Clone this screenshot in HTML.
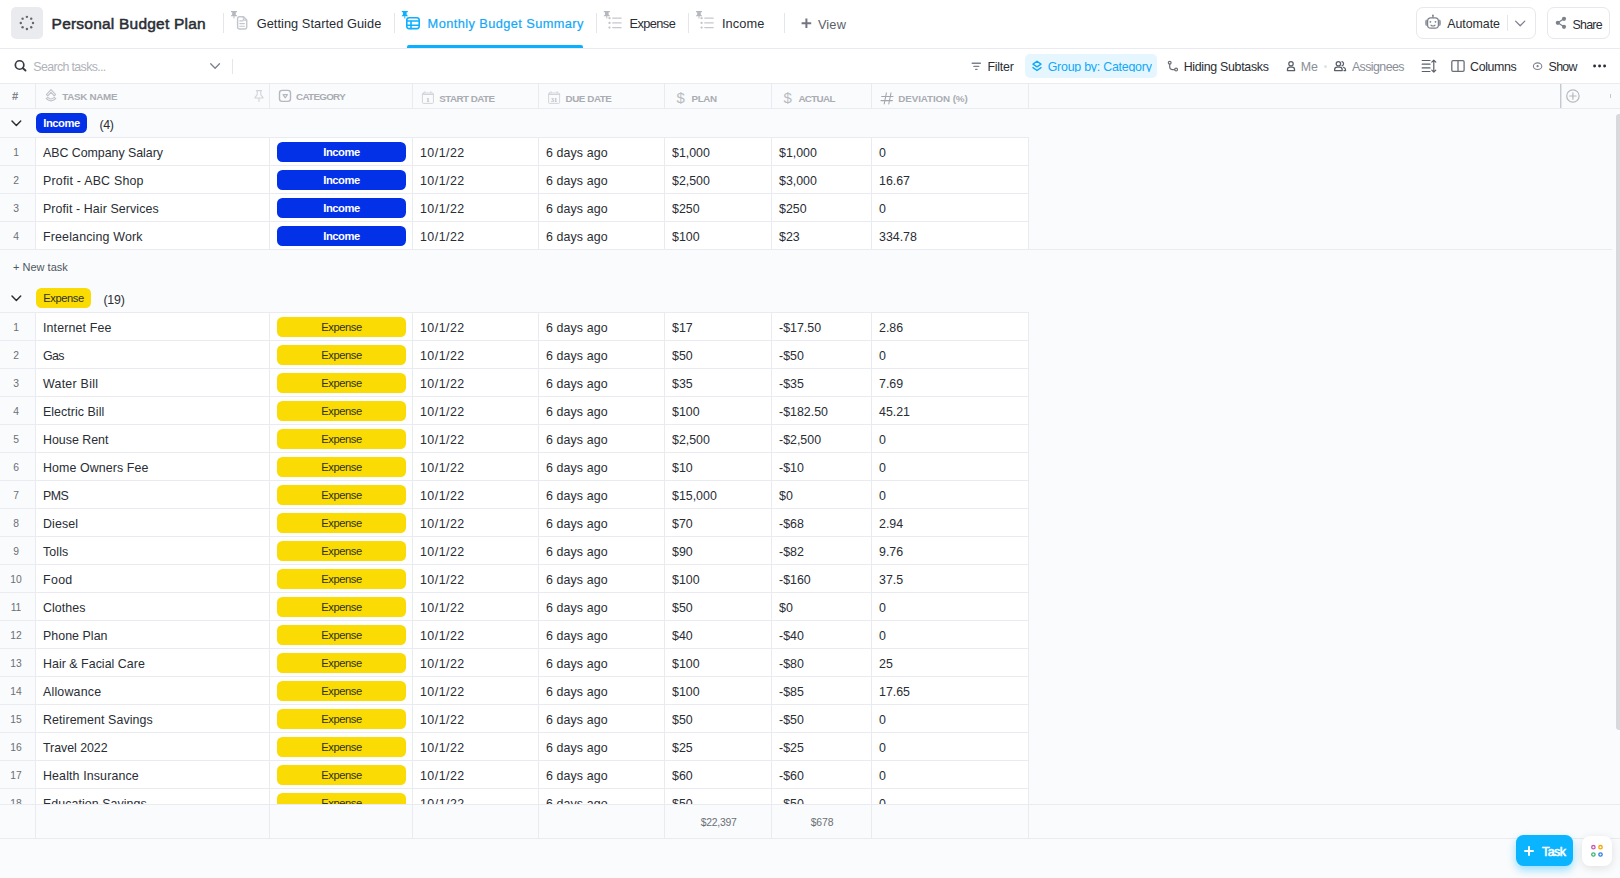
<!DOCTYPE html>
<html lang="en">
<head>
<meta charset="utf-8">
<title>Personal Budget Plan</title>
<style>
*{box-sizing:border-box;margin:0;padding:0}
html,body{width:1620px;height:878px;overflow:hidden;background:#fafbfc}
body{font-family:"Liberation Sans",sans-serif;color:#292d34;position:relative;font-size:12.4px}
.abs{position:absolute}
.t{position:absolute;white-space:nowrap;line-height:1}
#top{position:absolute;left:0;top:0;width:1620px;height:49px;background:#fff;border-bottom:1px solid #e9ebf0}
#fbar{position:absolute;left:0;top:49px;width:1620px;height:35px;background:#fff;border-bottom:1px solid #e9ebf0}
#thead{position:absolute;left:0;top:84px;width:1620px;height:25px;background:#fafbfc;border-bottom:1px solid #e9ebf0}
.vsep{position:absolute;width:1px;background:#e4e6ea}
.hl{position:absolute;top:0;width:1px;height:24px;background:#e9ebf0}
#body{position:absolute;left:0;top:109px;width:1620px;height:695px;overflow:hidden}
.rows{position:absolute;left:0;width:1029px;border-top:1px solid #e9ebf0}
.rows .row{position:relative;display:flex;height:28px;border-bottom:1px solid #e9ebf0;background:#fff}
.c{height:27px;line-height:31px;white-space:nowrap;overflow:hidden;border-right:1px solid #e9ebf0;padding-left:7px;font-size:12.4px;color:#292d34}
.c0{width:36px;background:#fafbfc;color:#6b6f76;font-size:10.3px;padding-left:0;padding-right:3px;text-align:center;line-height:29px}
.c1{width:234px}
.c2{width:143px;padding:0;position:relative}
.c3{width:126px;letter-spacing:0.48px}
.c4{width:126px;letter-spacing:0.1px}
.c5{width:107px}
.c6{width:100px}
.c7{width:157px}
.pill{position:absolute;left:7px;top:4px;width:129px;height:20px;border-radius:5.5px;text-align:center;line-height:20px;font-size:11.2px;letter-spacing:-0.45px}
.badge{position:absolute;height:20px;border-radius:5.5px;text-align:center;line-height:20px;font-size:11.2px;letter-spacing:-0.45px}
.inc{background:#0231e8;color:#fff;font-weight:700}
.exp{background:#fadb03;color:#2f3226;font-weight:400}
#icons{position:absolute;left:0;top:0;width:1620px;height:878px;overflow:visible;pointer-events:none}
</style>
</head>
<body>
<div id="top">
  <div class="abs" style="left:11px;top:7px;width:32px;height:32px;border-radius:5px;background:#eaebee"></div>
  <div class="vsep" style="left:223px;top:13px;height:20px"></div>
  <div class="vsep" style="left:394px;top:13px;height:20px"></div>
  <div class="abs" style="left:407px;top:45px;width:176px;height:3px;background:#08b0ff;border-radius:2px 2px 0 0"></div>
  <div class="vsep" style="left:596px;top:13px;height:20px"></div>
  <div class="vsep" style="left:688px;top:13px;height:20px"></div>
  <div class="vsep" style="left:784px;top:13px;height:20px"></div>
  <div class="abs" style="left:1416px;top:7px;width:120px;height:32px;border:1px solid #e6e8ed;border-radius:7px;background:#fff"></div>
  <div class="vsep" style="left:1507px;top:15px;height:16px"></div>
  <div class="abs" style="left:1547px;top:7px;width:63px;height:32px;border:1px solid #e6e8ed;border-radius:7px;background:#fff"></div>
</div>
<div id="fbar">
  <div class="vsep" style="left:232px;top:10px;height:15px"></div>
  <div class="abs" style="left:1025px;top:5px;width:132px;height:24px;border-radius:5px;background:#e5f6ff"></div>
</div>
<div id="thead">
  <div class="hl" style="left:35px"></div>
  <div class="hl" style="left:269px"></div>
  <div class="hl" style="left:412px"></div>
  <div class="hl" style="left:538px"></div>
  <div class="hl" style="left:664px"></div>
  <div class="hl" style="left:771px"></div>
  <div class="hl" style="left:871px"></div>
  <div class="hl" style="left:1028px"></div>
  <div class="abs" style="left:1560px;top:0;width:1px;height:24px;background:#c6c9cf"></div><div class="abs" style="left:1561px;top:0;width:1px;height:24px;background:#e3e5ea"></div>
  <div class="abs" style="left:1610px;top:10px;width:1px;height:4px;background:#c5c7cd"></div>
</div>
<div id="body">
  <div class="badge inc" style="left:36px;top:4px;width:51px">Income</div>
  <div class="rows" style="top:28px">
<div class="row"><div class="c c0">1</div><div class="c c1" style="letter-spacing:-0.035px">ABC Company Salary</div><div class="c c2"><span class="pill inc">Income</span></div><div class="c c3">10/1/22</div><div class="c c4">6 days ago</div><div class="c c5">$1,000</div><div class="c c6">$1,000</div><div class="c c7">0</div></div>
<div class="row"><div class="c c0">2</div><div class="c c1" style="letter-spacing:0.212px">Profit - ABC Shop</div><div class="c c2"><span class="pill inc">Income</span></div><div class="c c3">10/1/22</div><div class="c c4">6 days ago</div><div class="c c5">$2,500</div><div class="c c6">$3,000</div><div class="c c7">16.67</div></div>
<div class="row"><div class="c c0">3</div><div class="c c1" style="letter-spacing:0.095px">Profit - Hair Services</div><div class="c c2"><span class="pill inc">Income</span></div><div class="c c3">10/1/22</div><div class="c c4">6 days ago</div><div class="c c5">$250</div><div class="c c6">$250</div><div class="c c7">0</div></div>
<div class="row"><div class="c c0">4</div><div class="c c1" style="letter-spacing:0.173px">Freelancing Work</div><div class="c c2"><span class="pill inc">Income</span></div><div class="c c3">10/1/22</div><div class="c c4">6 days ago</div><div class="c c5">$100</div><div class="c c6">$23</div><div class="c c7">334.78</div></div>
  </div>
  <div class="abs" style="left:1029px;top:140px;width:583px;height:1px;background:#e9ebf0"></div>
  <div class="badge exp" style="left:36px;top:179px;width:55px">Expense</div>
  <div class="rows" style="top:203px">
<div class="row"><div class="c c0">1</div><div class="c c1" style="letter-spacing:0.145px">Internet Fee</div><div class="c c2"><span class="pill exp">Expense</span></div><div class="c c3">10/1/22</div><div class="c c4">6 days ago</div><div class="c c5">$17</div><div class="c c6">-$17.50</div><div class="c c7">2.86</div></div>
<div class="row"><div class="c c0">2</div><div class="c c1" style="letter-spacing:-0.7px">Gas</div><div class="c c2"><span class="pill exp">Expense</span></div><div class="c c3">10/1/22</div><div class="c c4">6 days ago</div><div class="c c5">$50</div><div class="c c6">-$50</div><div class="c c7">0</div></div>
<div class="row"><div class="c c0">3</div><div class="c c1" style="letter-spacing:0.266px">Water Bill</div><div class="c c2"><span class="pill exp">Expense</span></div><div class="c c3">10/1/22</div><div class="c c4">6 days ago</div><div class="c c5">$35</div><div class="c c6">-$35</div><div class="c c7">7.69</div></div>
<div class="row"><div class="c c0">4</div><div class="c c1" style="letter-spacing:0.05px">Electric Bill</div><div class="c c2"><span class="pill exp">Expense</span></div><div class="c c3">10/1/22</div><div class="c c4">6 days ago</div><div class="c c5">$100</div><div class="c c6">-$182.50</div><div class="c c7">45.21</div></div>
<div class="row"><div class="c c0">5</div><div class="c c1">House Rent</div><div class="c c2"><span class="pill exp">Expense</span></div><div class="c c3">10/1/22</div><div class="c c4">6 days ago</div><div class="c c5">$2,500</div><div class="c c6">-$2,500</div><div class="c c7">0</div></div>
<div class="row"><div class="c c0">6</div><div class="c c1" style="letter-spacing:0.1px">Home Owners Fee</div><div class="c c2"><span class="pill exp">Expense</span></div><div class="c c3">10/1/22</div><div class="c c4">6 days ago</div><div class="c c5">$10</div><div class="c c6">-$10</div><div class="c c7">0</div></div>
<div class="row"><div class="c c0">7</div><div class="c c1" style="letter-spacing:-0.5px">PMS</div><div class="c c2"><span class="pill exp">Expense</span></div><div class="c c3">10/1/22</div><div class="c c4">6 days ago</div><div class="c c5">$15,000</div><div class="c c6">$0</div><div class="c c7">0</div></div>
<div class="row"><div class="c c0">8</div><div class="c c1" style="letter-spacing:0.12px">Diesel</div><div class="c c2"><span class="pill exp">Expense</span></div><div class="c c3">10/1/22</div><div class="c c4">6 days ago</div><div class="c c5">$70</div><div class="c c6">-$68</div><div class="c c7">2.94</div></div>
<div class="row"><div class="c c0">9</div><div class="c c1" style="letter-spacing:0.1px">Tolls</div><div class="c c2"><span class="pill exp">Expense</span></div><div class="c c3">10/1/22</div><div class="c c4">6 days ago</div><div class="c c5">$90</div><div class="c c6">-$82</div><div class="c c7">9.76</div></div>
<div class="row"><div class="c c0">10</div><div class="c c1" style="letter-spacing:0.334px">Food</div><div class="c c2"><span class="pill exp">Expense</span></div><div class="c c3">10/1/22</div><div class="c c4">6 days ago</div><div class="c c5">$100</div><div class="c c6">-$160</div><div class="c c7">37.5</div></div>
<div class="row"><div class="c c0">11</div><div class="c c1" style="letter-spacing:0.067px">Clothes</div><div class="c c2"><span class="pill exp">Expense</span></div><div class="c c3">10/1/22</div><div class="c c4">6 days ago</div><div class="c c5">$50</div><div class="c c6">$0</div><div class="c c7">0</div></div>
<div class="row"><div class="c c0">12</div><div class="c c1" style="letter-spacing:0.044px">Phone Plan</div><div class="c c2"><span class="pill exp">Expense</span></div><div class="c c3">10/1/22</div><div class="c c4">6 days ago</div><div class="c c5">$40</div><div class="c c6">-$40</div><div class="c c7">0</div></div>
<div class="row"><div class="c c0">13</div><div class="c c1" style="letter-spacing:0.035px">Hair &amp; Facial Care</div><div class="c c2"><span class="pill exp">Expense</span></div><div class="c c3">10/1/22</div><div class="c c4">6 days ago</div><div class="c c5">$100</div><div class="c c6">-$80</div><div class="c c7">25</div></div>
<div class="row"><div class="c c0">14</div><div class="c c1" style="letter-spacing:0.199px">Allowance</div><div class="c c2"><span class="pill exp">Expense</span></div><div class="c c3">10/1/22</div><div class="c c4">6 days ago</div><div class="c c5">$100</div><div class="c c6">-$85</div><div class="c c7">17.65</div></div>
<div class="row"><div class="c c0">15</div><div class="c c1" style="letter-spacing:0.094px">Retirement Savings</div><div class="c c2"><span class="pill exp">Expense</span></div><div class="c c3">10/1/22</div><div class="c c4">6 days ago</div><div class="c c5">$50</div><div class="c c6">-$50</div><div class="c c7">0</div></div>
<div class="row"><div class="c c0">16</div><div class="c c1" style="letter-spacing:-0.04px">Travel 2022</div><div class="c c2"><span class="pill exp">Expense</span></div><div class="c c3">10/1/22</div><div class="c c4">6 days ago</div><div class="c c5">$25</div><div class="c c6">-$25</div><div class="c c7">0</div></div>
<div class="row"><div class="c c0">17</div><div class="c c1" style="letter-spacing:0.133px">Health Insurance</div><div class="c c2"><span class="pill exp">Expense</span></div><div class="c c3">10/1/22</div><div class="c c4">6 days ago</div><div class="c c5">$60</div><div class="c c6">-$60</div><div class="c c7">0</div></div>
<div class="row"><div class="c c0">18</div><div class="c c1" style="letter-spacing:0.062px">Education Savings</div><div class="c c2"><span class="pill exp">Expense</span></div><div class="c c3">10/1/22</div><div class="c c4">6 days ago</div><div class="c c5">$50</div><div class="c c6">-$50</div><div class="c c7">0</div></div>
  </div>
</div>
<div id="foot" class="abs" style="left:0;top:804px;width:1620px;height:35px;border-top:1px solid #e9ebf0;border-bottom:1px solid #e9ebf0;background:#fafbfc">
  <div class="hl" style="left:35px;height:33px"></div>
  <div class="hl" style="left:269px;height:33px"></div>
  <div class="hl" style="left:412px;height:33px"></div>
  <div class="hl" style="left:538px;height:33px"></div>
  <div class="hl" style="left:664px;height:33px"></div>
  <div class="hl" style="left:771px;height:33px"></div>
  <div class="hl" style="left:871px;height:33px"></div>
  <div class="hl" style="left:1028px;height:33px"></div>
</div>
<div class="abs" style="left:1616px;top:114px;width:4px;height:616px;background:#d8d9dd;border-radius:3px 0 0 3px"></div>
<div class="abs" style="left:1516px;top:835px;width:57px;height:31px;border-radius:7.5px;background:#0ab4ff;box-shadow:0 4px 8px rgba(10,180,255,.42)"></div>
<div class="abs" style="left:1582px;top:836px;width:30px;height:30px;border-radius:8px;background:#fff;box-shadow:0 2px 10px rgba(0,0,0,.11)"></div>
<div class="t" style="left:51.6px;top:15px;line-height:17px;font-size:15.5px;color:#292d34;letter-spacing:0.214px;-webkit-text-stroke:0.5px #292d34;">Personal Budget Plan</div>
<div class="t" style="left:256.7px;top:16px;line-height:15px;font-size:12.8px;color:#2a2e34;letter-spacing:0.041px;">Getting Started Guide</div>
<div class="t" style="left:427.6px;top:16px;line-height:15px;font-size:12.8px;color:#12a8f8;letter-spacing:0.408px;-webkit-text-stroke:0.2px #12a8f8;">Monthly Budget Summary</div>
<div class="t" style="left:629.5px;top:16px;line-height:15px;font-size:12.8px;color:#2a2e34;letter-spacing:-0.585px;">Expense</div>
<div class="t" style="left:721.9px;top:16px;line-height:15px;font-size:12.8px;color:#2a2e34;letter-spacing:0.086px;">Income</div>
<div class="t" style="left:817.9px;top:17px;line-height:15px;font-size:12.8px;color:#5a5f69;letter-spacing:0.161px;">View</div>
<div class="t" style="left:1447.2px;top:17px;line-height:14px;font-size:12.4px;color:#2a2e34;letter-spacing:-0.035px;">Automate</div>
<div class="t" style="left:1572.6px;top:18px;line-height:14px;font-size:12.4px;color:#2a2e34;letter-spacing:-0.770px;">Share</div>
<div class="t" style="left:33.3px;top:60px;line-height:14px;font-size:12.4px;color:#b0b3b9;letter-spacing:-0.640px;">Search tasks...</div>
<div class="t" style="left:987.4px;top:60px;line-height:14px;font-size:12.4px;color:#2a2e34;letter-spacing:-0.229px;">Filter</div>
<div class="t" style="left:1047.7px;top:60px;line-height:14px;font-size:12.4px;color:#12a8f8;letter-spacing:-0.232px;height:12px;overflow:hidden;">Group by: Category</div>
<div class="t" style="left:1183.7px;top:60px;line-height:14px;font-size:12.4px;color:#2a2e34;letter-spacing:-0.310px;">Hiding Subtasks</div>
<div class="t" style="left:1300.7px;top:60px;line-height:14px;font-size:12.4px;color:#8a8e97;letter-spacing:-0.119px;">Me</div>
<div class="t" style="left:1351.9px;top:60px;line-height:14px;font-size:12.4px;color:#8a8e97;letter-spacing:-0.571px;">Assignees</div>
<div class="t" style="left:1470.1px;top:60px;line-height:14px;font-size:12.4px;color:#2a2e34;letter-spacing:-0.384px;">Columns</div>
<div class="t" style="left:1548.6px;top:60px;line-height:14px;font-size:12.4px;color:#2a2e34;letter-spacing:-0.700px;">Show</div>
<div class="t" style="left:12.0px;top:90px;line-height:12px;font-size:11.2px;color:#7c828d;font-weight:700;">#</div>
<div class="t" style="left:62.2px;top:91px;line-height:11px;font-size:9.8px;color:#a9acb2;font-weight:700;letter-spacing:-0.277px;">TASK NAME</div>
<div class="t" style="left:296.0px;top:91px;line-height:11px;font-size:9.8px;color:#a9acb2;font-weight:700;letter-spacing:-0.677px;">CATEGORY</div>
<div class="t" style="left:439.3px;top:93px;line-height:11px;font-size:9.8px;color:#a9acb2;font-weight:700;letter-spacing:-0.533px;">START DATE</div>
<div class="t" style="left:565.6px;top:93px;line-height:11px;font-size:9.8px;color:#a9acb2;font-weight:700;letter-spacing:-0.437px;">DUE DATE</div>
<div class="t" style="left:691.6px;top:93px;line-height:11px;font-size:9.8px;color:#a9acb2;font-weight:700;letter-spacing:-0.391px;">PLAN</div>
<div class="t" style="left:798.4px;top:93px;line-height:11px;font-size:9.8px;color:#a9acb2;font-weight:700;letter-spacing:-0.636px;">ACTUAL</div>
<div class="t" style="left:898.3px;top:93px;line-height:11px;font-size:9.8px;color:#a9acb2;font-weight:700;letter-spacing:-0.098px;">DEVIATION (%)</div>
<div class="t" style="left:676.4px;top:89px;line-height:17px;font-size:15px;color:#b8bbc1;">$</div>
<div class="t" style="left:783.6px;top:89px;line-height:17px;font-size:15px;color:#b8bbc1;">$</div>
<div class="t" style="left:99.6px;top:118px;line-height:14px;font-size:12.4px;color:#2a2e34;letter-spacing:-0.378px;">(4)</div>
<div class="t" style="left:103.4px;top:293px;line-height:14px;font-size:12.4px;color:#2a2e34;letter-spacing:-0.216px;">(19)</div>
<div class="t" style="left:13.0px;top:261px;line-height:12px;font-size:11px;color:#4f5762;letter-spacing:0.009px;">+ New task</div>
<div class="t" style="left:700.7px;top:817px;line-height:11px;font-size:10.4px;color:#6b6f76;letter-spacing:-0.244px;">$22,397</div>
<div class="t" style="left:810.7px;top:817px;line-height:11px;font-size:10.4px;color:#6b6f76;letter-spacing:-0.108px;">$678</div>
<div class="t" style="left:1542.0px;top:845px;line-height:14px;font-size:12.4px;color:#ffffff;letter-spacing:-0.495px;-webkit-text-stroke:0.55px #fff;">Task</div>
<svg id="icons" viewBox="0 0 1620 878" fill="none" stroke-linecap="round" stroke-linejoin="round">
<!-- title dashed circle -->
<g fill="#62666f" stroke="none"><circle cx="33.00" cy="22.95" r="1.2"/><circle cx="31.21" cy="27.26" r="1.2"/><circle cx="26.90" cy="29.05" r="1.2"/><circle cx="22.59" cy="27.26" r="1.2"/><circle cx="20.80" cy="22.95" r="1.2"/><circle cx="22.59" cy="18.64" r="1.2"/><circle cx="26.90" cy="16.85" r="1.2"/><circle cx="31.21" cy="18.64" r="1.2"/></g>
<!-- tab pins -->
<path transform="translate(231 11)" stroke="none" fill="#b5b8be" d="M0 0h6v1.2h-1.2v2.3l1.2 1.2v.6H3.45v2.1H2.55V5.3H0v-.6l1.2-1.2V1.2H0z"/>
<path transform="translate(401.8 11)" stroke="none" fill="#0db0ff" d="M0 0h6v1.2h-1.2v2.3l1.2 1.2v.6H3.45v2.1H2.55V5.3H0v-.6l1.2-1.2V1.2H0z"/>
<path transform="translate(603.8 11)" stroke="none" fill="#b5b8be" d="M0 0h6v1.2h-1.2v2.3l1.2 1.2v.6H3.45v2.1H2.55V5.3H0v-.6l1.2-1.2V1.2H0z"/>
<path transform="translate(696 11)" stroke="none" fill="#b5b8be" d="M0 0h6v1.2h-1.2v2.3l1.2 1.2v.6H3.45v2.1H2.55V5.3H0v-.6l1.2-1.2V1.2H0z"/>
<!-- doc icon -->
<g stroke="#c3c6cc" stroke-width="1.45">
  <path d="M239.3 16.7h4.2l3.2 3.2v7.3a1.7 1.7 0 0 1-1.7 1.7h-5.7a1.7 1.7 0 0 1-1.7-1.7v-8.8a1.7 1.7 0 0 1 1.7-1.7z"/>
  <path d="M243.3 16.9v3.2h3.2" stroke-width="1.1"/>
  <path d="M239.8 20.9h3M239.8 23.6h4.6M239.8 26.3h4.6" stroke-width="1.1"/>
</g>
<!-- table icon -->
<g stroke="#0db0ff" stroke-width="1.6">
  <rect x="406.8" y="17.8" width="12.4" height="10.8" rx="2.3"/>
  <path d="M406.8 21h12.4M406.8 25.2h12.4M411 21v7.6"/>
</g>
<!-- list icons -->
<g transform="translate(608.2 17.5)"><path stroke="#c5c8ce" stroke-width="1.25" d="M4.5 0.65h8.4M4.5 5.4h8.4M4.5 10.1h8.4"/><g fill="#c0c3c9" stroke="none"><circle cx="1.3" cy="0.65" r="1.15"/><circle cx="1.3" cy="5.4" r="1.15"/><circle cx="1.3" cy="10.1" r="1.15"/></g></g>
<g transform="translate(700.3 17.5)"><path stroke="#c5c8ce" stroke-width="1.25" d="M4.5 0.65h8.4M4.5 5.4h8.4M4.5 10.1h8.4"/><g fill="#c0c3c9" stroke="none"><circle cx="1.3" cy="0.65" r="1.15"/><circle cx="1.3" cy="5.4" r="1.15"/><circle cx="1.3" cy="10.1" r="1.15"/></g></g>
<!-- plus view -->
<path d="M801.6 23.3h9.6M806.4 18.5v9.6" stroke="#70757f" stroke-width="2" stroke-linecap="butt"/>
<!-- robot -->
<g stroke="#7c828d" stroke-width="1.25">
  <rect x="1427.6" y="17.8" width="10.8" height="10.4" rx="3.2"/>
  <path d="M1433 17.6v-1.6"/>
  <path d="M1431 25.2q2 1.6 4 0" stroke-width="1.1"/>
</g>
<path d="M1427 19.6a1.9 1.9 0 0 0-1.9 1.9v2.6a1.9 1.9 0 0 0 1.9 1.9zM1439 19.6a1.9 1.9 0 0 1 1.9 1.9v2.6a1.9 1.9 0 0 1-1.9 1.9z" fill="#9a9ea7"/>
<circle cx="1432.9" cy="15.4" r="0.9" fill="#7c828d"/>
<circle cx="1430.4" cy="21.8" r="0.9" fill="#7c828d"/>
<circle cx="1435.5" cy="21.8" r="0.9" fill="#7c828d"/>
<!-- automate chevron -->
<path d="M1515.6 21.1l4.6 4.6 4.6-4.6" stroke="#7c828d" stroke-width="1.3"/>
<!-- share -->
<g fill="#7c828d"><circle cx="1564" cy="18.8" r="2.1"/><circle cx="1557.8" cy="22.8" r="2.1"/><circle cx="1564" cy="26.8" r="2.1"/></g>
<path d="M1564 18.8L1557.8 22.8l6.2 4" stroke="#7c828d" stroke-width="1.3"/>
<!-- search -->
<circle cx="19.6" cy="65" r="4.25" stroke="#373b44" stroke-width="1.7"/>
<path d="M22.9 68.2l2.6 2.3" stroke="#373b44" stroke-width="1.9"/>
<path d="M210.7 63.8l4.4 4.5 4.4-4.5" stroke="#7c828d" stroke-width="1.3"/>
<!-- filter -->
<path d="M972.2 63.2h8.2M973.9 66.4h4.8M975.7 69.4h1.3" stroke="#7c828d" stroke-width="1.4"/>
<!-- layers (group by) -->
<g stroke="#12a8f8" stroke-width="1.4">
  <path d="M1037 61.3l4 2.8-4 2.8-4-2.8z"/>
  <path d="M1033 67.6l4 2.9 4-2.9"/>
</g>
<!-- subtasks -->
<g stroke="#6b6f76" stroke-width="1.2">
  <circle cx="1169.7" cy="62.8" r="1.4"/>
  <path d="M1169.7 64.2v2.6q0 2.8 2.8 2.8h2.1"/>
  <circle cx="1176.1" cy="69.6" r="1.4"/>
</g>
<!-- me -->
<g stroke="#5a5f69" stroke-width="1.25">
  <circle cx="1291" cy="63.7" r="2.2"/>
  <path d="M1287.4 70.5v-.6a2.7 2.7 0 0 1 2.7-2.7h1.8a2.7 2.7 0 0 1 2.7 2.7v.6z"/>
</g>
<circle cx="1325.5" cy="66.6" r="1.4" fill="#dcdee3"/>
<!-- assignees -->
<g stroke="#5a5f69" stroke-width="1.25">
  <circle cx="1338.4" cy="63.7" r="2.2"/>
  <path d="M1334.6 70.5v-.6a2.7 2.7 0 0 1 2.7-2.7h2.2a2.7 2.7 0 0 1 2.7 2.7v.6z"/>
  <path d="M1342 61.6a2.2 2.2 0 0 1 0 4.2"/>
  <path d="M1343.6 67.4a2.7 2.7 0 0 1 2 2.6v.5h-1.6"/>
</g>
<!-- row height -->
<g stroke="#5a5f69" stroke-width="1.2">
  <path d="M1422.2 60.5h7.8M1422.2 64.2h7.8M1422.2 67.9h7.8M1422.2 71.5h7.8"/>
  <path d="M1433.8 60.2v11.8M1431.8 62.1l2-2 2 2M1431.8 70.1l2 2 2-2"/>
</g>
<!-- columns -->
<g stroke="#6b6f76" stroke-width="1.3">
  <rect x="1451.8" y="60.7" width="12.3" height="10.6" rx="1.2"/>
  <path d="M1458 60.7v10.6"/>
</g>
<!-- eye -->
<ellipse cx="1537.6" cy="66.2" rx="4.2" ry="3.3" stroke="#7c828d" stroke-width="1.1"/>
<circle cx="1537.6" cy="66.2" r="1.15" fill="#7c828d"/>
<!-- ellipsis -->
<g fill="#2a2e34"><circle cx="1594.6" cy="66" r="1.45"/><circle cx="1599.6" cy="66" r="1.45"/><circle cx="1604.6" cy="66" r="1.45"/></g>
<!-- header: task icon -->
<g stroke="#c0c3c9" stroke-width="1.15">
  <path d="M46.4 94.6L51 89.6l4.6 5-1.4 1.2L51 92.4l-3.2 3.4z"/>
  <path d="M46.2 98.6l1.5-1.2q3.3 3.2 6.6 0l1.5 1.2q-4.8 4.6-9.6 0z"/>
</g>
<!-- header: pin outline -->
<g stroke="#d2d4da" stroke-width="1.1">
  <path d="M256.4 90.6h5.2M257.2 90.8v4l-2.2 2.6v.6h8v-.6l-2.2-2.6v-4M259 98v3.4"/>
</g>
<!-- header: dropdown -->
<rect x="279.5" y="90.4" width="11" height="11" rx="2.6" stroke="#b5b8be" stroke-width="1.4"/>
<path d="M283 94.6h4.4l-2.2 3.3z" stroke="#b5b8be" stroke-width="1.1"/>
<!-- calendars -->
<g transform="translate(421.9 91.1)" stroke="#d2d4da"><rect x="0.5" y="1.9" width="11" height="10.4" rx="1" stroke-width="1"/><path d="M0.5 3.4h11" stroke-width="1.2"/><path d="M3 0.5v1.4M9 0.5v1.4" stroke-width="1"/></g>
<g transform="translate(548.1 91.1)" stroke="#d2d4da"><rect x="0.5" y="1.9" width="11" height="10.4" rx="1" stroke-width="1"/><path d="M0.5 3.4h11" stroke-width="1.2"/><path d="M3 0.5v1.4M9 0.5v1.4" stroke-width="1"/></g>
<text x="427.9" y="101.9" font-family="Liberation Serif, serif" font-size="6.5" fill="#b5b8be" stroke="none" text-anchor="middle" font-weight="700">1</text>
<text x="554.1" y="101.9" font-family="Liberation Serif, serif" font-size="6.5" fill="#b5b8be" stroke="none" text-anchor="middle" font-weight="700">31</text>
<!-- header: hash -->
<path d="M881.6 96.4h11.4M881 100.6h11.4M886.4 92.9l-2.2 11M891 92.9l-2.2 11" stroke="#a3a6ac" stroke-width="1.05"/>
<!-- plus circle -->
<circle cx="1572.9" cy="96" r="6.2" stroke="#b5b8be" stroke-width="1.2"/>
<path d="M1569.7 96h6.4M1572.9 92.8v6.4" stroke="#b5b8be" stroke-width="1.2"/>
<!-- group chevrons -->
<path d="M12 121.1l4.35 4.5 4.35-4.5" stroke="#2a2e34" stroke-width="1.45"/>
<path d="M12 296.1l4.35 4.5 4.35-4.5" stroke="#2a2e34" stroke-width="1.45"/>
<!-- task plus -->
<path d="M1524.3 851h9.4M1529 846.3v9.4" stroke="#fff" stroke-width="2" stroke-linecap="butt"/>
<!-- apps -->
<g stroke-width="1.3">
  <circle cx="1593.4" cy="847.2" r="1.7" stroke="#c25bb5"/>
  <circle cx="1600.5" cy="847.2" r="1.7" stroke="#f5a500"/>
  <circle cx="1593.4" cy="854.5" r="1.7" stroke="#3cb371"/>
  <circle cx="1600.5" cy="854.5" r="1.7" stroke="#2f7de1"/>
</g>
</svg>

</body>
</html>
